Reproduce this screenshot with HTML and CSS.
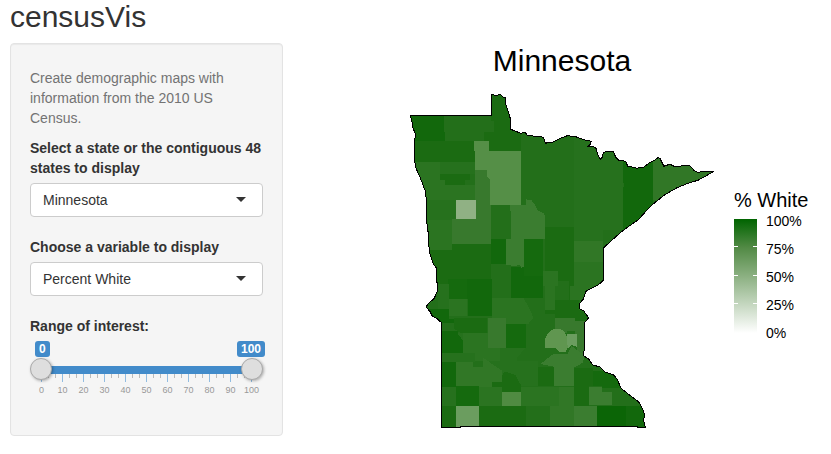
FILE: index.html
```html
<!DOCTYPE html>
<html lang="en">
<head>
<meta charset="utf-8">
<meta name="viewport" content="width=device-width, initial-scale=1">
<title>censusVis</title>
<link rel="stylesheet" href="styles.css">
</head>
<body>
<h1 class="app-title">censusVis</h1>
<div class="layout">
  <form class="sidebar">
    <p class="help">Create demographic maps with information from the 2010 US Census.</p>
    <div class="field">
      <label class="label" for="state">Select a state or the contiguous 48 states to display</label>
      <div class="select-wrap"><select id="state" class="select"><option>Minnesota</option></select></div>
    </div>
    <div class="field">
      <label class="label" for="variable">Choose a variable to display</label>
      <div class="select-wrap"><select id="variable" class="select"><option>Percent White</option></select></div>
    </div>
    <div class="field">
      <label class="label" id="range-label" for="range-min">Range of interest:</label>
      <div class="values"><output class="value" for="range-min">0</output><output class="value" for="range-max">100</output></div>
      <div class="slider">
        <div class="ticks"><i></i><i></i><i></i><i></i><i></i><i></i><i></i><i></i><i></i><i></i><i></i><i></i><i></i><i></i><i></i><i></i><i></i><i></i><i></i><i></i><i></i><i></i><i></i><i></i><i></i><i></i><i></i><i></i><i></i><i></i><i></i></div>
        <input class="range" id="range-min" type="range" min="0" max="100" value="0">
        <input class="range" id="range-max" type="range" min="0" max="100" value="100" aria-labelledby="range-label">
      </div>
      <div class="scale"><span>0</span><span>10</span><span>20</span><span>30</span><span>40</span><span>50</span><span>60</span><span>70</span><span>80</span><span>90</span><span>100</span></div>
    </div>
  </form>
  <main class="plot">
    <h2 class="plot-title">Minnesota</h2>
    <svg class="map" viewBox="409 93 305 335" role="img" aria-labelledby="legend-title">
      <defs>
        <path id="outline" d="M410.500 115.500H491.500V94.500L496 95.500 500 94.500 503 97 505.500 97V104L508 112 510.500 120 510 129 515 131 520 133 525 132.500 527 135.500 535 136 543 137 545 143 552 142 560 138 567 135.500 575 136.500 583 139.500 590.500 141 590 144 587.500 146 595 147 597 154 599.500 159 602 157 602.500 153 605 151.500H613L615 157 618 160 625 161 627 166 632 167 636 168 643 167 648 163 654 160 657 157.500 659 158 661 162 663 166 669 164 673 166 689 165.500 693 170 697 172.500 701 171 712 171.500 706 175 697 180 687 183 675 188 663 195 652 204 645 211 638 219 628 226 620 232 612 239 605 245.500 602.500 248V280L598 284 590 288 585 291 583 298 579 303 578.500 308 583 310 588 317 584 322 583.500 336 584 345 583 355 588 358 592 364 599 366 604 371 613 374 617 379 620 387 630 395 638 401 642 408 643.500 413 643 420 644.500 426.500H637V425.500H460V426.500H441.500V322L437 318 432 315 430 311 426 306 429 302 434 298 437 291V283L436 267 433 263 430 254 429 248 428.500 234 427 226 426.500 201 425 190 420 177 416 168 414.500 160 414 140 416 135 413 128 412 122Z"/>
        <clipPath id="state-clip"><use href="#outline"/></clipPath>
      </defs>
      <g clip-path="url(#state-clip)" shape-rendering="crispEdges">
        <path fill="#236f1a" d="M409 93H714V428H409Z"/>
        <path fill="#0b6506" d="M596 405H625V428H596Z"/>
        <path fill="#12680c" d="M409 115H444V132H445V141H409ZM491 239H506V263H491ZM467 278H492V315H468V298H467ZM511 266H543V297H511ZM426 308H449V318H454V322H442V330H457L468 347H463V352H442V330H426ZM442 361H456V386H442ZM625 405H646V428H625Z"/>
        <path fill="#156a0e" d="M448 278H467V298H448ZM524 239H543V275H524ZM506 322H526V347H506ZM456 385H479V405H456ZM592 370H612L622 387H601V385H592ZM622 160H652V222L640 228H622V187H623Z"/>
        <path fill="#1b6b12" d="M491 93H512L514 130 521 131V151H489V141H484V132H494V121H491ZM414 141H475V162H414ZM440 174H470V180H465V185H445V180H440ZM429 249H448V283H429ZM448 244H491V278H448ZM545 227H573V280H545ZM555 299H568V275H573V285H569V299H578V309H590V323H574V317H555V313H545V309H555ZM454 317H487V332H460L454 328ZM442 405H456V428H442ZM479 405H526V428H479ZM492 381H502V370L515 374 521 381V391H502V390H492ZM538 366H554V385H538ZM573 367H592V385H588V405H573Z"/>
        <path fill="#12680c" d="M622 160H652V222L622 230V187H623Z"/>
        <path fill="#26711d" d="M573 130H622V230H602V241H573ZM440 162H475V174H440ZM427 200H456V220H427ZM438 283H449V308H438ZM457 332H487V347H525L502 374 475 352H463V347H468ZM442 352H475V361H442ZM442 386H456V405H442ZM506 347H517V360H538V385H521L515 374 502 370Z"/>
        <path fill="#2b7421" d="M414 162H440V180H445V185H475V200H426ZM428 220H452V249H428ZM449 298H467V315H449ZM492 297H523L530 310 533 317 528 323H506V317H492ZM573 261H602V280L585 291 584 299H569V285H573ZM543 270H558V285H555V309H545V285H543ZM479 386H502V405H479ZM521 386H559V405H521ZM463 332H488V347H500V360H475V352H463Z"/>
        <path fill="#317726" d="M456 361H473V366H483V357L502 370V381H492V386H479V385H456ZM573 241H602V261H573ZM550 405H573V428H550ZM559 386H573V405H559ZM652 150H714V200H652Z"/>
        <path fill="#38792d" d="M475 170H490V195H491V219H476V200H475ZM452 219H491V244H452ZM488 317H506V347H488ZM555 317H574V330H566V332H555ZM574 320H585V355H576V333H574Z"/>
        <path fill="#3b7d30" d="M510 205H526V199L531 200 535 205 537 210 544 213 545 239H524V266L521 267 519 264 515 266 506 264V239H511ZM540 363L553 353 567 353 571 345 575 348 584 355 582 362 573 367V385H554V366ZM588 386H601V391H611V404H588ZM573 405H596V428H573Z"/>
        <path fill="#508b42" d="M502 391H521V405H502Z"/>
        <path fill="#558f47" d="M474 141H489V151H521V205H490V179L487 177V170H475V151H474Z"/>
        <path fill="#609650" d="M545 337L548 332 553 328H560L564 331 566 335 568 345 565 351H559L555 347H545Z"/>
        <path fill="#6b9d5f" d="M566 333H576V346L571 344 568 347 566 342ZM456 405H479V428H456Z"/>
        <path fill="#90b184" d="M456 200H476V219H456Z"/>
      </g>
      <use href="#outline" fill="none" stroke="#000" shape-rendering="crispEdges"/>
    </svg>
    <section class="legend">
      <h3 class="legend-title" id="legend-title">% White</h3>
      <div class="legend-body">
        <div class="ramp"></div>
        <div class="legend-labels"><span>100%</span><span>75%</span><span>50%</span><span>25%</span><span>0%</span></div>
      </div>
    </section>
  </main>
</div>
</body>
</html>
```
FILE: styles.css
```css
* { box-sizing: border-box; }

body {
  margin: 0;
  padding: 0 2px 0 10px;
  background: #fff;
  color: #333;
  font: 14px/20px "Liberation Sans", Arial, sans-serif;
}

.app-title {
  margin: 0 0 10px;
  font-size: 30px;
  font-weight: 400;
  line-height: 33px;
}

.layout {
  display: grid;
  grid-template-columns: minmax(0, 1fr) minmax(0, 2fr);
  align-items: start;
}

/* Control panel */
.sidebar {
  padding: 24px 19px 38px;
  border: 1px solid #e3e3e3;
  border-radius: 4px;
  background: #f5f5f5;
  box-shadow: inset 0 1px 1px rgba(0, 0, 0, 0.05);
}

.help { margin: 0 0 10px; color: #737373; }
.field + .field { margin-top: 20px; }
.label { display: block; margin-bottom: 5px; font-weight: 700; }

.select-wrap { position: relative; }
.select-wrap::after {
  content: "";
  position: absolute;
  top: 14px;
  right: 17px;
  border: 5px solid transparent;
  border-top-color: #333;
  border-bottom: 0;
  pointer-events: none;
}

.select {
  display: block;
  width: 100%;
  height: 34px;
  padding: 0 12px;
  appearance: none;
  border: 1px solid #ccc;
  border-radius: 4px;
  background: #fff;
  color: #333;
  font: inherit;
}

/* Range slider */
.values {
  display: flex;
  justify-content: space-between;
  margin: 0 -2px 0 5px;
}

.value {
  padding: 0 4px;
  border-radius: 3px;
  background: #428bca;
  color: #fff;
  font-size: 12px;
  font-weight: 700;
  line-height: 16px;
}

.slider { position: relative; height: 26px; padding: 9px 11px 0; }

.ticks {
  display: flex;
  justify-content: space-between;
  border-top: 8px solid #428bca;
}
.ticks i { width: 1px; height: 4px; background: #bbb; }
.ticks i:nth-child(3n + 1) { height: 8px; background: #92bce0; }

.range {
  position: absolute;
  top: 1px;
  left: 0;
  width: 100%;
  height: 22px;
  margin: 0;
  appearance: none;
  background: none;
  pointer-events: none;
}

.range::-webkit-slider-thumb {
  width: 22px;
  height: 22px;
  appearance: none;
  border: 1px solid #aaa;
  border-radius: 50%;
  background: #dedede;
  box-shadow: 1px 1px 3px rgba(0, 0, 0, 0.3);
  pointer-events: auto;
}

.scale {
  display: flex;
  justify-content: space-between;
  padding: 0 11px;
  color: #999;
  font-size: 9px;
  line-height: 14px;
}
.scale span { display: flex; justify-content: center; width: 1px; }

/* Map and legend */
.plot {
  display: grid;
  grid-template-columns: minmax(0, 1fr) 74px;
  column-gap: 19px;
  padding: 0 21px 0 126px;
  color: #000;
}

.plot-title {
  margin: 0 0 14px;
  font-size: 30px;
  font-weight: 400;
  line-height: 36px;
  text-align: center;
}

.map { display: block; grid-row: 2; width: 100%; }
.legend { grid-row: 2; margin-top: 95px; }

.legend-title {
  margin: 0 0 7px;
  font-size: 20px;
  font-weight: 400;
  line-height: 24px;
  white-space: nowrap;
}

.legend-body { display: flex; gap: 9px; }

.ramp {
  width: 23px;
  height: 114px;
  background:
    linear-gradient(#fff, #fff) 0 27px / 4px 1px no-repeat,
    linear-gradient(#fff, #fff) 100% 27px / 4px 1px no-repeat,
    linear-gradient(#fff, #fff) 0 56px / 4px 1px no-repeat,
    linear-gradient(#fff, #fff) 100% 56px / 4px 1px no-repeat,
    linear-gradient(#fff, #fff) 0 84px / 4px 1px no-repeat,
    linear-gradient(#fff, #fff) 100% 84px / 4px 1px no-repeat,
    linear-gradient(#006400, #528a45 25%, #8bb081 50%, #c5d7c0 75%, #fff);
}

.legend-labels {
  display: flex;
  flex-direction: column;
  gap: 12px;
  margin-top: -6px;
  line-height: 16px;
}
```
